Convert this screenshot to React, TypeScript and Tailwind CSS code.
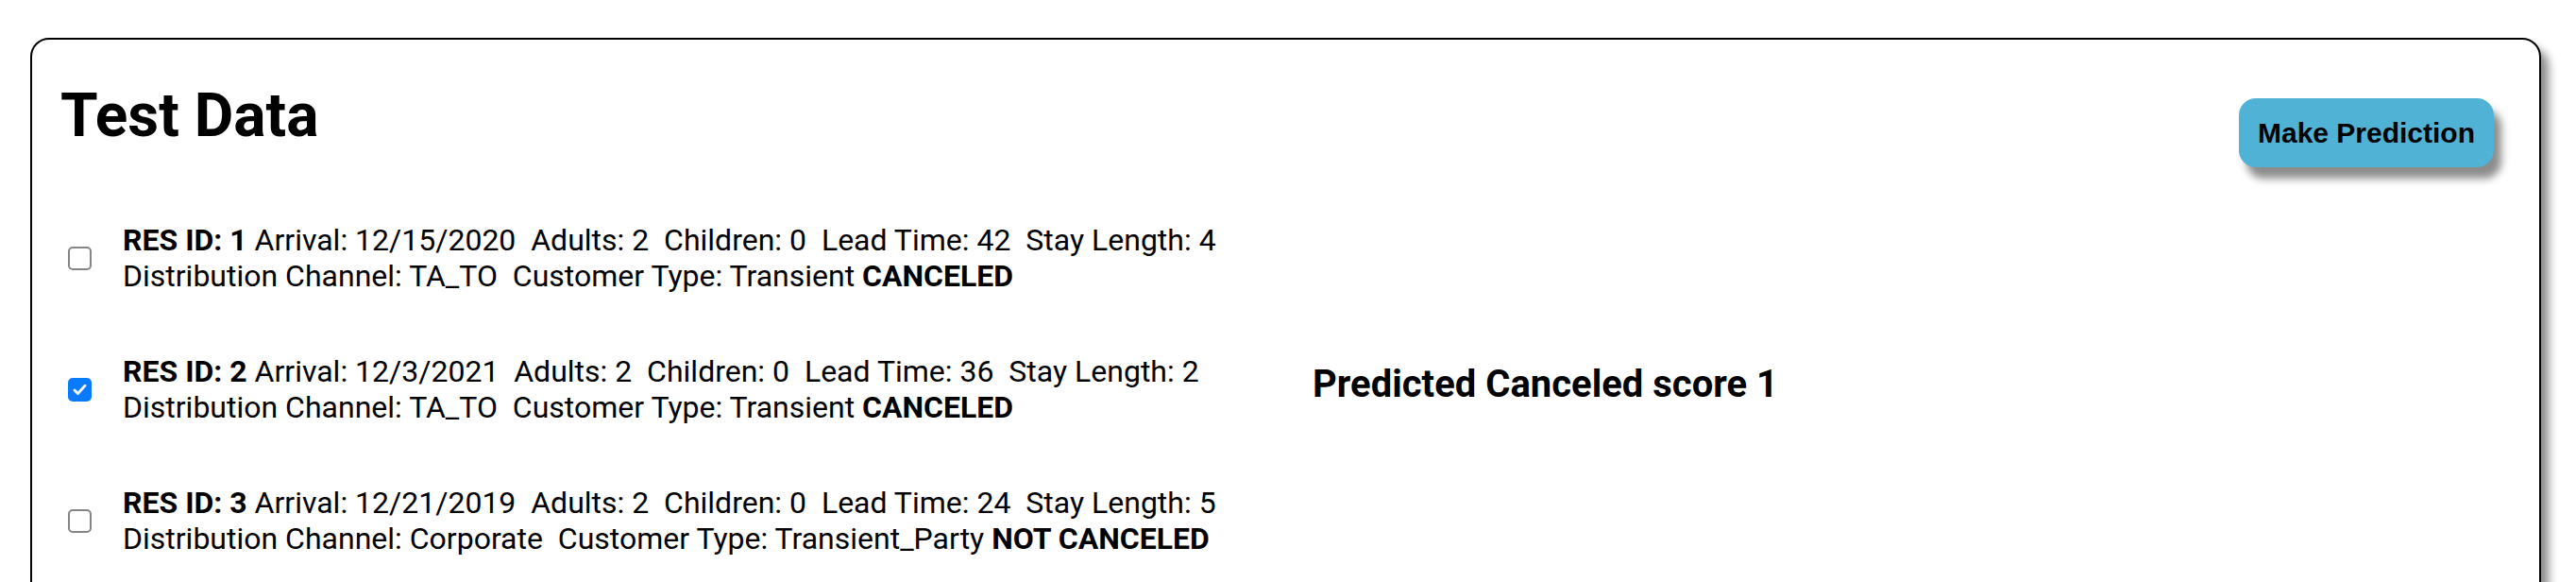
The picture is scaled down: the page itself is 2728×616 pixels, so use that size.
import React, { useState } from "react";

type Reservation = {
  id: number;
  arrival: string;
  adults: number;
  children: number;
  leadTime: number;
  stayLength: number;
  channel: string;
  customerType: string;
  canceled: boolean;
};

const RESERVATIONS: Reservation[] = [
  {
    id: 1,
    arrival: "12/15/2020",
    adults: 2,
    children: 0,
    leadTime: 42,
    stayLength: 4,
    channel: "TA_TO",
    customerType: "Transient",
    canceled: true,
  },
  {
    id: 2,
    arrival: "12/3/2021",
    adults: 2,
    children: 0,
    leadTime: 36,
    stayLength: 2,
    channel: "TA_TO",
    customerType: "Transient",
    canceled: true,
  },
  {
    id: 3,
    arrival: "12/21/2019",
    adults: 2,
    children: 0,
    leadTime: 24,
    stayLength: 5,
    channel: "Corporate",
    customerType: "Transient_Party",
    canceled: false,
  },
];

const SP = "\u00a0 ";

const App: React.FC = () => {
  const [selected, setSelected] = useState<number[]>([2]);
  const [scores] = useState<Record<number, number>>({ 2: 1 });

  const toggle = (id: number) =>
    setSelected((prev) =>
      prev.includes(id) ? prev.filter((x) => x !== id) : [...prev, id]
    );

  return (
    <div className="min-h-screen bg-white pt-[40px] pl-[32px] font-['Roboto',sans-serif] text-black">
      <div className="w-[2659px] min-h-[720px] border-2 border-black rounded-[20px] shadow-[8px_10px_10px_rgba(0,0,0,0.45)] px-[30px] pt-[43px]">
        <div className="flex items-start justify-between">
          <h1 className="text-[64px] font-bold leading-[1.172]">Test Data</h1>
          <button className="mt-[19px] mr-[18px] h-[73px] w-[270px] rounded-[18px] bg-[#50b2d4] font-['Liberation_Sans',Arial,sans-serif] text-[30px] font-bold shadow-[8px_12px_8px_rgba(0,0,0,0.45)]">
            Make Prediction
          </button>
        </div>

        <div className="mt-[59px] flex flex-col gap-[64px]">
          {RESERVATIONS.map((r) => {
            const checked = selected.includes(r.id);
            return (
              <div key={r.id} className="flex items-center">
                <label className="relative ml-[8px] flex h-[25px] w-[25px]">
                  <input
                    type="checkbox"
                    checked={checked}
                    onChange={() => toggle(r.id)}
                    className="m-0 h-[25px] w-[25px] appearance-none rounded-[5px] border-2 border-[#858585] bg-white checked:border-[#0a7aff] checked:bg-[#0a7aff]"
                  />
                  {checked && (
                    <svg
                      viewBox="0 0 24 24"
                      className="pointer-events-none absolute left-[3px] top-[3px] h-[19px] w-[19px]"
                    >
                      <path
                        d="M5 12.5l4.5 4.5L19 6.5"
                        fill="none"
                        stroke="white"
                        strokeWidth="3.6"
                        strokeLinecap="round"
                        strokeLinejoin="round"
                      />
                    </svg>
                  )}
                </label>
                <div className="ml-[33px] w-[1260px] text-[32px] leading-[1.172]">
                  <div>
                    <b>RES ID: {r.id}</b> Arrival: {r.arrival}
                    {SP}Adults: {r.adults}
                    {SP}Children: {r.children}
                    {SP}Lead Time: {r.leadTime}
                    {SP}Stay Length: {r.stayLength}
                  </div>
                  <div>
                    Distribution Channel: {r.channel}
                    {SP}Customer Type: {r.customerType}{" "}
                    <b>{r.canceled ? "CANCELED" : "NOT CANCELED"}</b>
                  </div>
                </div>
                {scores[r.id] !== undefined && (
                  <h3 className="mb-[10px] text-[40px] font-bold leading-[1.172]">
                    Predicted Canceled score {scores[r.id]}
                  </h3>
                )}
              </div>
            );
          })}
        </div>
      </div>
    </div>
  );
};

export default App;
